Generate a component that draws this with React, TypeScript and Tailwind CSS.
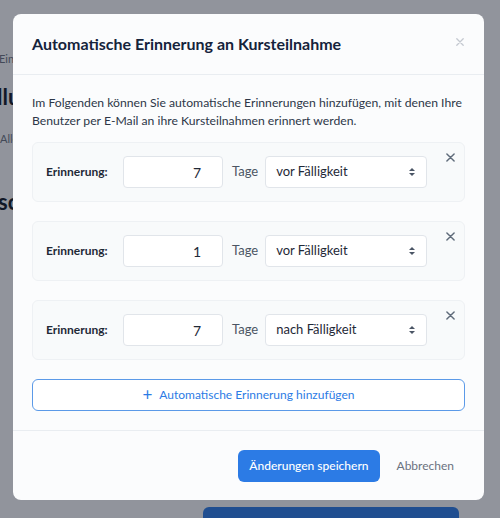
import { useState } from 'react';

type Reminder = {
    id: number;
    days: number;
    when: 'vor' | 'nach';
};

const font = 'font-["Lato","Liberation_Sans",sans-serif]';

// kleine Doppelpfeile wie beim nativen Select
const SortIcon = () => (
    <svg width="8" height="10" viewBox="0 0 8 10" className="text-gray-600">
        <path d="M4 1 L7 4 H1 Z" fill="currentColor" />
        <path d="M4 9 L1 6 H7 Z" fill="currentColor" />
    </svg>
);

const CloseIcon = ({ className }: { className?: string }) => (
    <svg width="9" height="9" viewBox="0 0 10 10" className={className}>
        <path d="M1 1 L9 9 M9 1 L1 9" stroke="currentColor" strokeWidth="1.6" strokeLinecap="round" />
    </svg>
);

const ReminderRow = ({ reminder, onRemove }: { reminder: Reminder; onRemove: () => void }) => (
    <div className="relative flex items-center rounded-md border border-[#eef1f4] bg-[#f8fafb] px-[13px] py-[13px]">
        <span className="w-[77px] text-[12px] font-bold text-[#1f2937]">Erinnerung:</span>
        <div className="flex h-8 w-[100px] items-center justify-end rounded border border-[#e1e5ea] bg-white pr-[21px] text-[14px] text-[#1f2937]">
            {reminder.days}
        </div>
        <span className="ml-[9px] text-[13px] text-[#4b5563]">Tage</span>
        <div className="ml-[7px] flex h-8 w-[162px] items-center justify-between rounded border border-[#e1e5ea] bg-white pl-[10px] pr-[10px] text-[13px] text-[#1f2937]">
            <span>{reminder.when === 'vor' ? 'vor Fälligkeit' : 'nach Fälligkeit'}</span>
            <SortIcon />
        </div>
        <button onClick={onRemove} className="absolute top-[10px] right-[9px] text-[#5f6b7a]">
            <CloseIcon />
        </button>
    </div>
);

export default function App() {
    const [reminders, setReminders] = useState<Reminder[]>([
        { id: 1, days: 7, when: 'vor' },
        { id: 2, days: 1, when: 'vor' },
        { id: 3, days: 7, when: 'nach' },
    ]);

    return (
        <div className={`relative h-[518px] w-[500px] overflow-hidden bg-[#f9fafb] ${font}`}>
            {/* Seite im Hintergrund */}
            <div className="flex h-full">
                <div className="flex w-[240px] flex-col pt-[51px]">
                    <span className="-ml-px text-[11px] text-[#6b7280]">Einstellungen</span>
                    <span className="-ml-[3px] mt-[12px] text-[22px] font-bold text-[#111827]">llungen</span>
                    <span className="mt-[18px] text-[11px] text-[#6b7280]">Alle Kurse</span>
                    <span className="mt-[38px] -ml-[2px] text-[22px] font-bold text-[#111827]">schluss</span>
                </div>
                <div className="flex flex-1 flex-col items-end">
                    <div className="mt-[423px] flex w-[260px] flex-col pl-[24px]">
                        <span className="ml-[261px] text-[20px] font-bold text-[#111827]">ng</span>
                        <span className="ml-[257px] mt-[8px] text-[12px] text-[#6b7280]">ilnahme</span>
                        <span className="ml-[262px] mt-[3px] text-[12px] text-[#6b7280]">sind</span>
                    </div>
                </div>
            </div>
            <div className="absolute bottom-[-30px] left-[203px] h-[41px] w-[256px] rounded-md bg-[#2c7be5]" />

            {/* Overlay + Dialog */}
            <div className="absolute inset-0 bg-[#111827]/45">
                <div className="absolute top-[14px] left-[13px] flex w-[471px] flex-col rounded-lg bg-[#fbfcfd]">
                    <div className="flex h-[61px] items-center justify-between border-b border-[#e9edf1] pr-[20px] pl-[19px]">
                        <h2 className="text-[16px] font-bold text-[#15233b]">Automatische Erinnerung an Kursteilnahme</h2>
                        <CloseIcon className="-mt-[5px] h-[8px] w-[8px] text-[#c4c9d0]" />
                    </div>
                    <div className="flex flex-col px-[19px] pt-[19px] pb-[19px]">
                        <p className="text-[12.2px] leading-[18px] text-[#2d3748]">
                            Im Folgenden können Sie automatische Erinnerungen hinzufügen, mit denen Ihre Benutzer per E-Mail
                            an ihre Kursteilnahmen erinnert werden.
                        </p>
                        <div className="mt-[12px] flex flex-col gap-[19px]">
                            {reminders.map((r) => (
                                <ReminderRow
                                    key={r.id}
                                    reminder={r}
                                    onRemove={() => setReminders((prev) => prev.filter((x) => x.id !== r.id))}
                                />
                            ))}
                        </div>
                        <button
                            onClick={() =>
                                setReminders((prev) => [...prev, { id: Date.now(), days: 7, when: 'vor' }])
                            }
                            className="mt-[19px] flex h-[32px] items-center justify-center gap-[7px] rounded-md border border-[#5b9ae8] bg-white text-[12px] text-[#2c7be5]"
                        >
                            <span className="-mt-px text-[17px] leading-none">+</span>
                            Automatische Erinnerung hinzufügen
                        </button>
                    </div>
                    <div className="flex items-center justify-end gap-[7px] border-t border-[#e9edf1] px-[20px] pt-[19px] pb-[18px]">
                        <button className="h-[32px] rounded-md bg-[#2c7be5] px-[11px] text-[12px] font-medium text-white">
                            Änderungen speichern
                        </button>
                        <button className="h-[32px] px-[10px] text-[12px] text-[#6b7280]">Abbrechen</button>
                    </div>
                </div>
            </div>
        </div>
    );
}
